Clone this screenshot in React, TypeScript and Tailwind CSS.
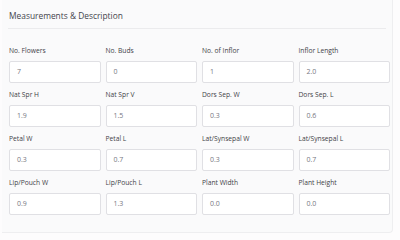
import React from "react";

const rows: [string, string][][] = [
  [["No. Flowers", "7"], ["No. Buds", "0"], ["No. of Inflor", "1"], ["Inflor Length", "2.0"]],
  [["Nat Spr H", "1.9"], ["Nat Spr V", "1.5"], ["Dors Sep. W", "0.3"], ["Dors Sep. L", "0.6"]],
  [["Petal W", "0.3"], ["Petal L", "0.7"], ["Lat/Synsepal W", "0.3"], ["Lat/Synsepal L", "0.7"]],
  [["Lip/Pouch W", "0.9"], ["Lip/Pouch L", "1.3"], ["Plant Width", "0.0"], ["Plant Height", "0.0"]],
];

export default function App() {
  return (
    <div className="w-[400px] h-[240px] bg-[#fdfcfd] overflow-hidden" style={{ fontFamily: "'Open Sans', sans-serif" }}>
      <div className="ml-[2px] mr-[7px] h-[233px] border-r border-b border-[#eeeef0] bg-[#fafafb] rounded-br">
        <div className="mx-[6px] h-[29px] pt-[4px] flex items-center border-b border-[#ebebed]">
          <span className="pl-[1px] text-[8.4px] text-[#44444c]">Measurements &amp; Description</span>
        </div>
        <div className="pl-[7px] pr-[2px] pt-[17px] flex flex-col gap-[7px]">
          {rows.map((r, i) => (
            <div key={i} className="grid grid-cols-4 gap-x-[5px]">
              {r.map(([label, value]) => (
                <div key={label} className="flex flex-col">
                  <label className="text-[6.7px] leading-[10px] text-[#3f3f47] h-[10px]">{label}</label>
                  <div className="mt-[5px] h-[22px] bg-white border border-[#e0e0e4] rounded-[2px] flex items-center px-[7px] text-[7px] text-[#77777f]">
                    {value}
                  </div>
                </div>
              ))}
            </div>
          ))}
        </div>
      </div>
    </div>
  );
}
